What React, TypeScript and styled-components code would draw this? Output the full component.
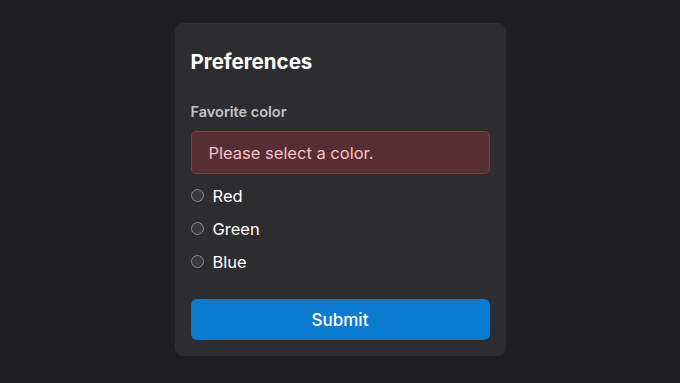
import styled, { createGlobalStyle } from 'styled-components'

const Global = createGlobalStyle`
  html, body { margin: 0; padding: 0; }
  body {
    background: #1e1e20;
    font-family: Inter, "Noto Sans", sans-serif;
    color: #fff;
  }
`

const Page = styled.div`
  min-height: 100vh;
  box-sizing: border-box;
  padding-bottom: 4px;
  display: flex;
  align-items: center;
  justify-content: center;
`

const Card = styled.form`
  width: 331px;
  box-sizing: border-box;
  padding: 25px 16px 16px;
  background: #2d2d30;
  border-radius: 8px;
  display: flex;
  flex-direction: column;
`

const Title = styled.h2`
  margin: 0 0 27px;
  font-size: 20.5px;
  font-weight: 700;
  line-height: 28px;
  color: #fff;
`

const Legend = styled.div`
  font-size: 14.5px;
  font-weight: 600;
  color: #c3c3c6;
  line-height: 18px;
  margin-bottom: 10px;
`

const ErrorBox = styled.div`
  height: 43px;
  flex-shrink: 0;
  box-sizing: border-box;
  padding: 0 17px;
  display: flex;
  align-items: center;
  background: #552f33;
  border: 1px solid #803c42;
  border-radius: 5px;
  color: #f8bfc3;
  font-size: 16.5px;
  margin-bottom: 5px;
`

const Options = styled.div`
  display: flex;
  flex-direction: column;
`

const Option = styled.label`
  height: 33px;
  display: flex;
  align-items: center;
  gap: 9px;
  font-size: 16.5px;
  color: #fff;
  cursor: pointer;
`

const Radio = styled.input.attrs({ type: 'radio' })`
  appearance: none;
  margin: 0;
  width: 13px;
  height: 13px;
  border-radius: 50%;
  border: 1px solid #8a8a8e;
  background: #3a3a3d;
  box-sizing: border-box;
`

const Button = styled.button`
  margin-top: 21px;
  height: 41px;
  flex-shrink: 0;
  border: none;
  border-radius: 6px;
  background: #0a7bcf;
  color: #fff;
  font-family: inherit;
  font-size: 17px;
  font-weight: 500;
`

export default function App() {
  const colors = ['Red', 'Green', 'Blue']
  return (
    <>
      <Global />
      <Page>
        <Card onSubmit={(e) => e.preventDefault()}>
          <Title>Preferences</Title>
          <Legend>Favorite color</Legend>
          <ErrorBox>Please select a color.</ErrorBox>
          <Options>
            {colors.map((c) => (
              <Option key={c}>
                <Radio name="color" value={c.toLowerCase()} />
                {c}
              </Option>
            ))}
          </Options>
          <Button type="submit">Submit</Button>
        </Card>
      </Page>
    </>
  )
}
